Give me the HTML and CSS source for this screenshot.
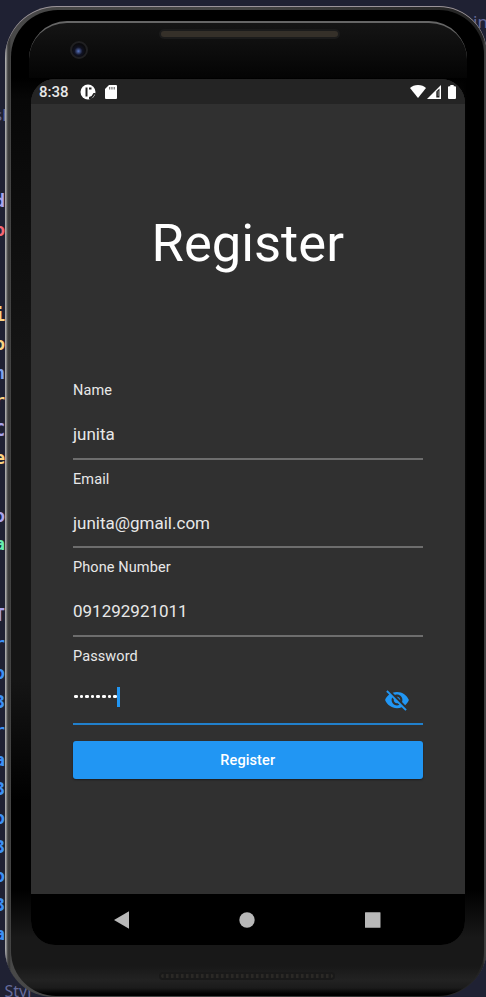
FILE: index.html
```html
<!DOCTYPE html>
<html lang="en">
<head>
<meta charset="utf-8">
<title>Register</title>
<link rel="stylesheet" href="styles.css">
</head>
<body>
<div class="desktop">
  <div class="backdrop">
    <span class="tab-left">sh</span><span class="tab-right">in</span><span class="style-note">: Styl</span>
    <div class="code code-top">
      <i class="lilac">d</i><i class="red">o</i><i></i><i></i><i class="gold">i</i><i class="gold">o</i><i class="sky">n</i><i class="gold">r</i><i class="lilac">C</i><i class="gold">e</i><i></i><i class="lilac">o</i><i class="mint">a</i>
    </div>
    <div class="code code-bottom">
      <i class="lilac">T</i><i>r</i><i>o</i><i>3</i><i>r</i><i>a</i><i>3</i><i>o</i><i>3</i><i>o</i><i>3</i><i>a</i>
    </div>
  </div>
  <div class="phone">
    <div class="body">
      <div class="glass"></div>
      <div class="camera"></div>
      <div class="speaker"></div>
      <main class="screen">
        <header class="status">
          <span class="time">8:38</span>
          <svg class="app" viewBox="0 0 16 16"><circle cx="8" cy="8" r="7.500" fill="#fff"/><path d="M5.500 3.500h2v9h-2zM9 3.500h2.500v2H9z" fill="#242424"/><path d="M9 9h6.500v.5L11.500 15H9z" fill="#242424"/><path d="M9 9h4.500q-1 3-4.500 4z" fill="#fff"/></svg>
          <svg class="card" viewBox="0 0 12 14"><path d="M4 0h7q1 0 1 1v12q0 1-1 1H1q-1 0-1-1V4z" fill="#fff"/><path d="M4 2h1.300v2.500H4zM6.300 2h1.300v2.500H6.300zM8.600 2h1.300v2.500H8.600z" fill="#777"/></svg>
          <span class="space"></span>
          <svg class="wifi" viewBox="0 0 16 13"><path d="M0 3Q3 0 8 0t8 3L8 13z" fill="#fff"/></svg>
          <svg class="signal" viewBox="0 0 14 14"><path d="M0 14 14 0v14z" fill="#fff"/><path d="M9.300 6.500 12.500 3.500v9H9.300z" fill="#242424"/><path d="M10.700 6h1v5h-1z" fill="#777"/></svg>
          <svg class="battery" viewBox="0 0 8 14"><path d="M2.300 0h3.400v1.300H7q1 0 1 1V13q0 1-1 1H1q-1 0-1-1V2.300q0-1 1-1h1.300z" fill="#fff"/></svg>
        </header>
        <form class="content">
          <h1>Register</h1>
          <div class="field"><label>Name</label><span class="value">junita</span></div>
          <div class="field"><label>Email</label><span class="value">junita@gmail.com</span></div>
          <div class="field"><label>Phone Number</label><span class="value">091292921011</span></div>
          <div class="field active">
            <label>Password</label>
            <div class="password">
              <span class="dots"><b></b><b></b><b></b><b></b><b></b><b></b><b></b><b></b></span><span class="caret"></span>
              <svg class="eye" viewBox="0 0 24 24"><path fill="#2196f3" d="M12 7c2.760 0 5 2.240 5 5 0 .65-.13 1.260-.36 1.830l2.920 2.920c1.510-1.260 2.700-2.890 3.430-4.750-1.730-4.390-6-7.500-11-7.500-1.400 0-2.740.25-3.980.7l2.160 2.160C10.740 7.130 11.350 7 12 7zM2 4.270l2.280 2.280.46.46C3.080 8.300 1.780 10.020 1 12c1.730 4.390 6 7.500 11 7.500 1.550 0 3.030-.3 4.380-.84l.42.42L19.730 22 21 20.730 3.270 3 2 4.270zM7.530 9.800l1.550 1.550c-.05.21-.08.43-.08.65 0 1.660 1.340 3 3 3 .22 0 .44-.03.65-.08l1.550 1.550c-.67.33-1.410.53-2.200.53-2.760 0-5-2.240-5-5 0-.79.2-1.530.53-2.200zm4.310-.78l3.150 3.150.02-.16c0-1.660-1.340-3-3-3l-.17.01z"/></svg>
            </div>
          </div>
          <button type="button">Register</button>
        </form>
        <nav>
          <svg viewBox="0 0 18 18"><path d="M1 9 16 .3v17.400z" fill="#b8b8b8"/></svg>
          <svg viewBox="0 0 18 18"><circle cx="9" cy="9" r="7.700" fill="#b8b8b8"/></svg>
          <svg viewBox="0 0 18 18"><rect x="1" y="1.300" width="15.500" height="15.500" rx=".5" fill="#b8b8b8"/></svg>
        </nav>
      </main>
      <div class="speaker bottom"></div>
    </div>
  </div>
</div>
</body>
</html>
```
FILE: styles.css
```css
* { box-sizing: border-box; }
body { margin: 0; background: #1f2133; font-family: Roboto, sans-serif; }
svg { display: block; flex: none; }
.desktop { position: relative; width: 486px; height: 997px; overflow: hidden; }
.backdrop { position: absolute; inset: 0; color: #666b9b; font: 17px/20px "Noto Sans", sans-serif; }
.tab-left { position: absolute; left: -6px; top: 105px; }
.tab-right { position: absolute; left: 473px; top: 12px; }
.style-note { position: absolute; left: -4px; top: 981px; font-size: 16px; }
.code { position: absolute; left: 0; width: 5px; overflow: hidden; display: flex; flex-direction: column; align-items: flex-end; color: #3d91f7; font: bold 18px/28.6px "DejaVu Sans Mono", monospace; }
.code i { height: 28.600px; font-style: normal; flex: none; }
.code-top { top: 187px; }
.code-bottom { top: 600px; line-height: 29px; }
.code-bottom i { height: 29px; }
.code .lilac { color: #aaa5ee; }
.code .red { color: #f66775; }
.code .gold { color: #fbd483; }
.code .sky { color: #82a4ee; }
.code .mint { color: #68efb0; }

.phone { position: relative; margin: 6px 0 0 5px; width: 482px; height: 991px; padding: 4px 3px 1px 6px; border-radius: 52px 48px 50px 48px; background: linear-gradient(90deg, #a9a9a9 0, #a9a9a9 1px, #5a5a5a 2px, #333 4px, #484848 6px, #444 50%, #222 478px, #444 480px, #333 482px); box-shadow: inset 0 1px #9a939a; }
.body { position: relative; height: 986px; border-radius: 47px 45px 46px 45px; padding: 69px 0 0 20px; background: linear-gradient(90deg, #0000 450px, #000 456px) 0 68px / 100% 810px no-repeat, linear-gradient(#000 0, #000 68px, #070707 90px, #151515 350px, #151515 670px, #000 790px, #000 880px, #181818 928px, #181818 956px, #222 970px, #1b1b1b 978px, #000 984px); }
.glass { position: absolute; left: 18px; right: 17px; top: 11px; height: 57px; border-top: 2px solid #666; border-radius: 38px 38px 0 0; background: linear-gradient(#151515, #040404); }
.camera { position: absolute; left: 59px; top: 31px; width: 18px; height: 18px; border-radius: 50%; border: 2px solid #202022; background: radial-gradient(circle at 46% 58%, #5675c4 0, #34416d 2px, #101222 4px, #0b0b0e 7px); }
.speaker { position: absolute; left: 148px; top: 19px; width: 181px; height: 10px; border: 2px solid #1b1b1b; border-radius: 5px; background: #353029; }
.speaker.bottom { top: 962px; height: 8px; width: 176px; border-color: #191919; background: repeating-linear-gradient(90deg, #2b2926 0, #2b2926 2px, #1a1a1a 3px, #1a1a1a 5px); }
.screen { position: relative; width: 433.500px; height: 866px; border-radius: 24px; overflow: hidden; background: #303030; display: flex; flex-direction: column; }
.status { height: 25px; background: #242424; display: flex; align-items: center; padding: 0 9px 0 8px; color: #e8e8e8; }
.time { width: 41px; font-size: 15px; font-weight: 500; line-height: 24px; }
.app { width: 16px; height: 16px; }
.card { width: 12px; height: 14px; margin-left: 9px; }
.space { flex: 1; }
.wifi { width: 16px; height: 13px; }
.signal { width: 14px; height: 14px; margin-left: 1px; }
.battery { width: 8px; height: 14px; margin-left: 7px; }
.content { height: 790px; padding: 102px 42px 0; }
h1 { margin: 0; height: 165px; color: #fff; font-size: 52.500px; line-height: 74px; font-weight: 400; text-align: center; white-space: nowrap; }
.field { height: 88.500px; border-bottom: 2px solid #6d6d6d; display: flex; flex-direction: column; color: #e8e8e8; }
.field label { font-size: 14.500px; line-height: 17px; padding-top: 11px; letter-spacing: .1px; }
.value { font-size: 17px; line-height: 22px; margin-top: 24px; }
.field.active { border-bottom-color: #2180cc; }
.password { display: flex; align-items: center; height: 28px; margin-top: 18px; padding-right: 13px; }
.dots { display: flex; gap: 2px; padding-left: 1px; }
.dots b { width: 3.600px; height: 3.600px; background: #fff; border-radius: 1.300px; }
.caret { width: 3px; height: 20px; background: #2196f3; }
.eye { width: 26px; height: 26px; margin-left: auto; margin-top: 6px; }
button { display: block; width: 100%; height: 38px; margin-top: 16px; padding: 0; border: 0; border-radius: 3px; background: #2196f3; color: #fff; font: 500 14.500px Roboto, sans-serif; letter-spacing: .1px; box-shadow: 0 1px 2px #0006; }
nav { height: 51px; background: #000; display: flex; align-items: center; justify-content: space-between; padding: 0 83px 0 82px; }
nav svg { width: 18px; height: 18px; }
```
